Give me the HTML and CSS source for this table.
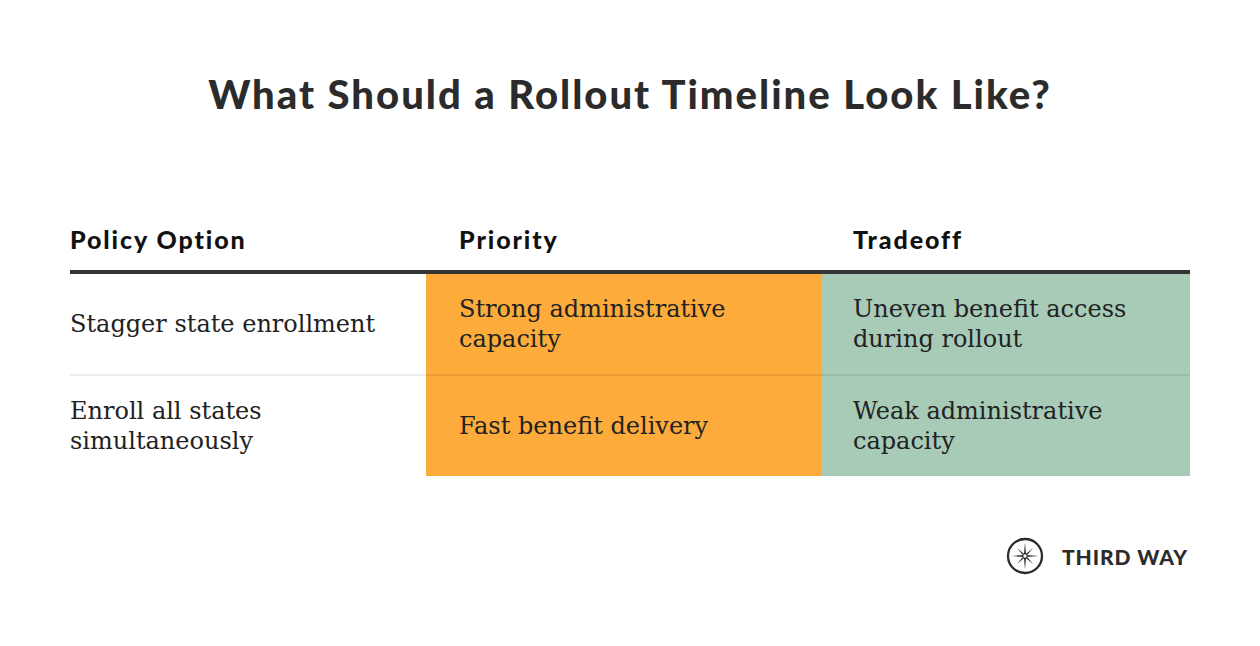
FILE: index.html
```html
<!DOCTYPE html>
<html lang="en">
<head>
<meta charset="utf-8">
<title>What Should a Rollout Timeline Look Like?</title>
<link rel="stylesheet" href="styles.css">
</head>
<body>
<main class="page">
  <h1 class="title">What Should a Rollout Timeline Look Like?</h1>
  <div class="table">
    <div class="th">Policy Option</div>
    <div class="th th-pad">Priority</div>
    <div class="th th-pad2">Tradeoff</div>
    <div class="rule"></div>

    <div class="td first">Stagger state enrollment</div>
    <div class="td first orange">Strong administrative<br>capacity</div>
    <div class="td first green">Uneven benefit access<br>during rollout</div>

    <div class="td">Enroll all states<br>simultaneously</div>
    <div class="td orange">Fast benefit delivery</div>
    <div class="td green">Weak administrative<br>capacity</div>
  </div>
  <footer class="brand">
    <svg class="brand-icon" width="38" height="38" viewBox="0 0 38 38" aria-hidden="true">
      <circle cx="19" cy="19" r="17" fill="none" stroke="#2b2b2b" stroke-width="2.3"/>
      <path d="M19 5.5 L20.1 17.9 L32.5 19 L20.1 20.1 L19 32.5 L17.9 20.1 L5.5 19 L17.9 17.9 Z" fill="#2b2b2b"/>
      <path d="M11 11 L19.7 18.3 L27 27 L18.3 19.7 Z M27 11 L19.7 19.7 L11 27 L18.3 18.3 Z" fill="#2b2b2b"/>
      <circle cx="19" cy="19" r="1.7" fill="#fff"/>
    </svg>
    <span class="brand-name">THIRD WAY</span>
  </footer>
</main>
</body>
</html>
```

FILE: styles.css
```css
html, body {
  margin: 0;
  padding: 0;
  background: #ffffff;
}

.page {
  width: 1120px;
  margin: 0 auto;
  padding-top: 69px;
  color: #222222;
}

.title {
  margin: 0;
  text-align: center;
  font-family: "Lato", "Liberation Sans", sans-serif;
  font-weight: 900;
  font-size: 40px;
  line-height: 50px;
  color: #2b2b2b;
  letter-spacing: 2px;
}

.table {
  margin-top: 105px;
  display: grid;
  grid-template-columns: 356px 396px 368px;
}

.th {
  font-family: "Lato", "Liberation Sans", sans-serif;
  font-weight: 900;
  font-size: 25px;
  line-height: 30px;
  color: #111111;
  letter-spacing: 1.9px;
  padding-bottom: 16px;
}

.th-pad {
  padding-left: 33px;
}

.th-pad2 {
  padding-left: 31px;
}

.rule {
  grid-column: 1 / -1;
  height: 4px;
  background: #333333;
}

.td {
  display: flex;
  align-items: center;
  min-height: 100px;
  font-family: "DejaVu Serif", "Liberation Serif", serif;
  font-size: 24px;
  line-height: 30px;
  color: #222222;
}

.td.first {
  border-bottom: 2px solid rgba(0, 0, 0, 0.07);
}

.td.orange {
  background: #fdac3b;
  padding-left: 33px;
}

.td.green {
  background: #a7cbb7;
  padding-left: 31px;
}

.brand {
  margin-top: 61px;
  display: flex;
  justify-content: flex-end;
  align-items: center;
  gap: 18px;
  padding-right: 2px;
}

.brand-icon {
  display: block;
}

.brand-name {
  font-family: "Lato", "Liberation Sans", sans-serif;
  font-weight: 900;
  font-size: 21px;
  letter-spacing: 0.9px;
  color: #2b2b2b;
}
```
